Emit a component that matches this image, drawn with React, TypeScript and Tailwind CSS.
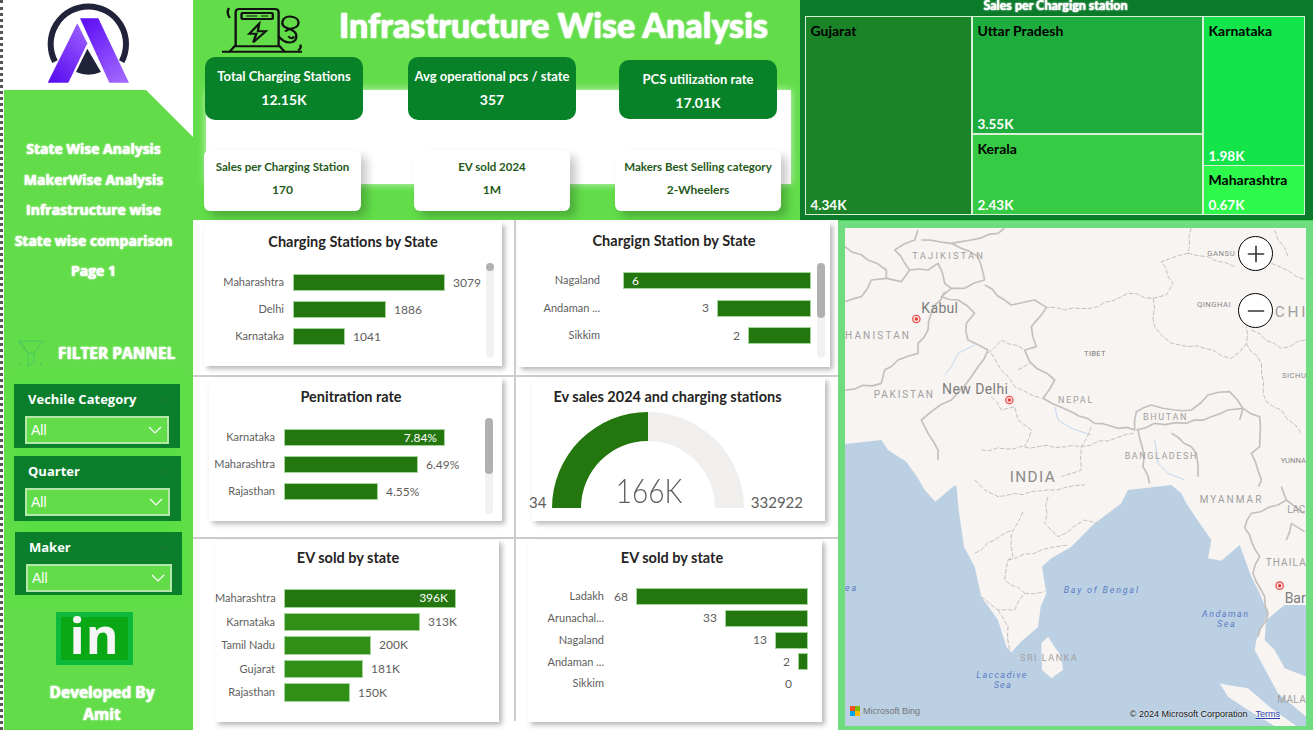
import React from "react";
import { Plus, Minus } from "lucide-react";

const narrow = "font-['Lato',sans-serif]";
const open = "font-['Open_Sans',sans-serif]";
const glow = "[text-shadow:0_0_2px_#fff,0_0_1px_#fff]";

function Logo() {
  return (
    <svg viewBox="12 0 567 270" className="w-[189px] h-[90px] block">
      <defs>
        <linearGradient id="l1" x1="0.8" y1="0" x2="0.2" y2="1">
          <stop offset="0" stopColor="#9a5cff" />
          <stop offset="1" stopColor="#5a10f0" />
        </linearGradient>
        <linearGradient id="l2" x1="0.2" y1="0" x2="0.8" y2="1">
          <stop offset="0" stopColor="#5f12f5" />
          <stop offset="1" stopColor="#a066ff" />
        </linearGradient>
      </defs>
      <path d="M165 185 A113 113 0 1 1 365 185" fill="none" stroke="#20233a" strokeWidth="18" />
      <path d="M262 146 L303 216 Q265 232 228 216 Z" fill="#20233a" />
      <path d="M232 70 L262 130 L205 248 L143 248 Z" fill="url(#l1)" />
      <path d="M240 55 L295 55 L387 248 L328 248 Z" fill="url(#l2)" />
    </svg>
  );
}

function Funnel() {
  return (
    <svg viewBox="0 0 27 27" className="w-[27px] h-[27px]" fill="none" stroke="#49c85c" strokeWidth="1">
      <path d="M1 1 H26 L17 13 V23 L11 26 V13 Z" />
      <path d="M3 1 L11 13 H17" />
      <circle cx="3" cy="24" r="1" fill="#49c85c" stroke="none" />
      <circle cx="24" cy="24" r="1" fill="#49c85c" stroke="none" />
    </svg>
  );
}

function Chev({ className }: { className: string }) {
  return (
    <svg viewBox="0 0 14 8" className={className} fill="none" stroke="currentColor" strokeWidth="1.2">
      <path d="M1 1 L7 7 L13 1" />
    </svg>
  );
}

function Slicer({ title, cls, inner }: { title: string; cls: string; inner: string }) {
  return (
    <div className={`bg-[#0b7e2c] shadow-[0_0_10px_#4fe23f] ${cls}`}>
      <div className="flex items-center justify-between pr-[11px] h-[32px] pl-[14px]">
        <span className={`${open} text-[13px] font-bold text-white`}>{title}</span>
        <Chev className="w-[10px] h-[6px] text-[#2f6f3d]" />
      </div>
      <div className={`${inner} h-[28px] bg-[#62dd49] border-2 border-[#b4e8a8] flex items-center justify-between pl-[4px] pr-[5px]`}>
        <span className="font-['Liberation_Sans',sans-serif] text-[14px] text-white mt-[1px]">All</span>
        <Chev className="w-[14px] h-[8px] text-white" />
      </div>
    </div>
  );
}

function Sidebar() {
  const nav = ["State Wise Analysis", "MakerWise Analysis", "Infrastructure wise", "State wise comparison", "Page 1"];
  return (
    <div className="w-[193px] h-[730px] shrink-0 border-l-[3px] border-dotted border-[#555] pl-px bg-white flex flex-col">
      <Logo />
      <div className="flex-1 bg-[#62dd49] [clip-path:polygon(0_0,142px_0,100%_47px,100%_100%,0_100%)] flex flex-col">
        <div className="mt-[44px] flex flex-col items-center pr-[10px]">
          {nav.map((n) => (
            <div key={n} className={`${open} h-[30.6px] leading-[30px] text-[14px] font-bold text-white ${glow}`}>{n}</div>
          ))}
        </div>
        <div className="flex items-center mt-[53px] ml-[13px]">
          <Funnel />
          <span className={`${open} ml-[14px] text-[15.5px] font-bold text-white ${glow}`}>FILTER PANNEL</span>
        </div>
        <Slicer title="Vechile Category" cls="mt-[17px] ml-[10px] w-[166px] h-[64px]" inner="ml-[11px] w-[144px]" />
        <Slicer title="Quarter" cls="mt-[8px] ml-[10px] w-[167px] h-[65px]" inner="ml-[11px] w-[145px]" />
        <Slicer title="Maker" cls="mt-[11px] ml-[11px] w-[167px] h-[63px]" inner="ml-[11px] w-[146px]" />
        <div className="mt-[17px] ml-[52px] w-[77px] h-[53px] bg-[#0cb93a] p-[5px]">
          <div className="w-full h-full bg-[#0aa815] flex items-center justify-center">
            <span className={`${open} font-bold text-[50px] leading-none text-[#f6f6f6] tracking-[1px] -mt-[6px]`}>in</span>
          </div>
        </div>
        <div className={`${open} mt-[16px] ml-[8px] w-[180px] text-center text-[15.5px] leading-[22px] font-bold text-white ${glow}`}>
          Developed By<br />Amit
        </div>
      </div>
    </div>
  );
}

function EvIcon() {
  return (
    <svg viewBox="0 0 210 150" preserveAspectRatio="none" className="w-[82px] h-[50px]" fill="none" stroke="#111" strokeWidth="6">
      <path d="M35 130 V28 Q35 18 45 18 H135 Q145 18 145 28 V130" />
      <rect x="50" y="30" width="80" height="18" rx="2" />
      <path d="M62 39 H90 M100 39 H118" strokeWidth="3" />
      <path d="M95 62 L70 92 L88 92 L80 118 L112 85 L92 85 Z" />
      <path d="M0 146 H205" strokeWidth="6" />
      <path d="M20 146 L32 130 H148 L160 146" />
      <path d="M145 100 C165 128 195 122 190 95 C185 70 150 82 155 55 C160 33 198 38 196 60 C195 80 168 74 162 86" />
      <path d="M170 100 C175 108 182 108 184 100" />
      <path d="M18 15 Q10 28 20 45 M200 125 Q205 135 195 142" />
    </svg>
  );
}

function Kpi({ t, v, cls, dark }: { t: string; v: string; cls: string; dark?: boolean }) {
  return dark ? (
    <div className={`rounded-[10px] bg-[#078229] flex flex-col items-center justify-center text-white ${cls}`}>
      <div className={`${narrow} font-bold text-[13px] leading-[17px] whitespace-nowrap`}>{t}</div>
      <div className={`${narrow} font-bold text-[14px] leading-[19px] mt-[5px] whitespace-nowrap`}>{v}</div>
    </div>
  ) : (
    <div className={`rounded-[6px] bg-white flex flex-col items-center shadow-[6px_6px_10px_rgba(0,0,0,0.22)] text-[#1f5a1a] ${cls}`}>
      <div className={`${narrow} font-bold text-[11.5px] leading-[16px] mt-[9px] whitespace-nowrap`}>{t}</div>
      <div className={`${narrow} font-bold text-[12px] leading-[16px] mt-[7px] whitespace-nowrap`}>{v}</div>
    </div>
  );
}

function Header() {
  return (
    <div className="relative w-[607px] h-[220px] bg-[#62dd49] shrink-0 overflow-hidden">
      <div className="absolute left-[13px] top-[90px] w-[585px] h-[94px] bg-white shadow-[0_0_8px_rgba(255,255,255,0.7)]" />
      <div className="relative h-[57px] flex">
        <div className="ml-[29px] mt-[3px]"><EvIcon /></div>
        <div className={`${narrow} ml-[35px] mt-[5px] text-[34px] leading-[40px] font-black text-white whitespace-nowrap ${glow}`}>Infrastructure Wise Analysis</div>
      </div>
      <div className="relative flex items-start h-[93px]">
        <Kpi dark t="Total Charging Stations" v="12.15K" cls="ml-[12px] w-[158px] h-[63px]" />
        <Kpi dark t="Avg operational pcs / state" v="357" cls="ml-[45px] w-[168px] h-[63px]" />
        <Kpi dark t="PCS utilization rate" v="17.01K" cls="ml-[43px] mt-[3px] w-[158px] h-[59px] pt-[3px]" />
      </div>
      <div className="relative flex items-start">
        <Kpi t="Sales per Charging Station" v="170" cls="ml-[11px] w-[157px] h-[61px]" />
        <Kpi t="EV sold 2024" v="1M" cls="ml-[53px] w-[156px] h-[61px]" />
        <Kpi t="Makers Best Selling category" v="2-Wheelers" cls="ml-[45px] w-[166px] h-[61px]" />
      </div>
    </div>
  );
}

function Tile({ name, val, cls }: { name: string; val: string; cls: string }) {
  return (
    <div className={`flex flex-col justify-between pl-[5px] pr-1 pt-[5px] pb-[1px] ${cls}`}>
      <div className={`${narrow} font-bold text-[14px] leading-[17px] text-black whitespace-nowrap`}>{name}</div>
      <div className={`${narrow} font-bold text-[13.5px] leading-[16px] text-white`}>{val}</div>
    </div>
  );
}

function Treemap() {
  return (
    <div className="flex-1 h-[220px] bg-[#0b7a2a] flex flex-col items-center">
      <div className={`${narrow} h-[16px] w-[510px] pr-[2px] text-center text-[12.5px] leading-[11px] font-bold text-white ${glow}`}>Sales per Chargign station</div>
      <div className="w-[500px] h-[199px] ml-[-4px] bg-[#d8f0d8] p-px flex gap-[2px]">
        <Tile name="Gujarat" val="4.34K" cls="w-[165px] bg-[#1b8429]" />
        <div className="w-[229px] flex flex-col gap-[2px]">
          <Tile name="Uttar Pradesh" val="3.55K" cls="h-[116px] bg-[#1fac3e]" />
          <Tile name="Kerala" val="2.43K" cls="flex-1 bg-[#37ca44]" />
        </div>
        <div className="flex-1 flex flex-col gap-px">
          <Tile name="Karnataka" val="1.98K" cls="h-[148px] bg-[#12e44a]" />
          <Tile name="Maharashtra" val="0.67K" cls="flex-1 bg-[#2dfa4a]" />
        </div>
      </div>
    </div>
  );
}

type Bar = { l: string; v: string; w: number; inside?: boolean; c?: string };

const labelCls = `${narrow} text-[11px] text-[#605e5c] whitespace-nowrap text-right`;
const valueCls = `${narrow} text-[12px] text-[#605e5c] whitespace-nowrap`;

function LeftBars({ bars, labelW, rowH, gap, top }: { bars: Bar[]; labelW: number; rowH: number; gap: number; top: number }) {
  return (
    <div className="flex flex-col" style={{ gap, marginTop: top }}>
      {bars.map((b) => (
        <div key={b.l} className="flex items-center" style={{ height: rowH }}>
          <div className={labelCls} style={{ width: labelW }}>{b.l}</div>
          <div
            className={`ml-[9px] h-full border border-[#a5d49b] flex items-center justify-end pr-[7px] ${b.c === "light" ? "bg-[#2f9015]" : "bg-[#24760f]"}`}
            style={{ width: b.w }}
          >
            {b.inside && <span className={`${narrow} text-[12px] text-white`}>{b.v}</span>}
          </div>
          {!b.inside && <div className={`${valueCls} ml-[8px]`}>{b.v}</div>}
        </div>
      ))}
    </div>
  );
}

function RightBars({ bars, labelW, rowH, gap, top, barsW }: { bars: Bar[]; labelW: number; rowH: number; gap: number; top: number; barsW: number }) {
  return (
    <div className="flex flex-col" style={{ gap, marginTop: top }}>
      {bars.map((b) => (
        <div key={b.l} className="flex items-center" style={{ height: rowH }}>
          <div className={labelCls} style={{ width: labelW }}>{b.l}</div>
          <div className="flex items-center justify-end h-full" style={{ width: barsW }}>
            {!b.inside && <span className={`${valueCls} mr-[8px]`}>{b.v}</span>}
            {b.w > 0 && (
              <div className="h-full bg-[#24760f] border border-[#a5d49b] flex items-center pl-[8px]" style={{ width: b.w }}>
                {b.inside && <span className={`${narrow} text-[12px] text-white`}>{b.v}</span>}
              </div>
            )}
            {b.w === 0 && <div className="w-[8px]" />}
          </div>
        </div>
      ))}
    </div>
  );
}

function Scroll({ h, thumb, thumbH, cls }: { h: number; thumb: string; thumbH: number; cls: string }) {
  return (
    <div className={`w-[8px] rounded bg-[#f1f1f1] ${cls}`} style={{ height: h }}>
      <div className={`rounded ${thumb}`} style={{ height: thumbH }} />
    </div>
  );
}

const title = `${narrow} font-bold text-[14.5px] leading-[18px] text-[#252423] text-center whitespace-nowrap`;
const cardShadow = "bg-white shadow-[3px_3px_5px_rgba(0,0,0,0.28)]";

function Gauge() {
  const cx = 100, cy = 98, R = 96, r = 67;
  return (
    <div className="relative w-[200px] h-[100px] ml-[16px] mt-[4px]">
      <svg viewBox="0 0 200 100" className="w-[200px] h-[100px]">
        <path d={`M${cx} ${cy - R} A${R} ${R} 0 0 1 ${cx + R} ${cy} H${cx + r} A${r} ${r} 0 0 0 ${cx} ${cy - r} Z`} fill="#f0efee" />
        <path d={`M${cx} ${cy - R} A${R} ${R} 0 0 0 ${cx - R} ${cy} H${cx - r} A${r} ${r} 0 0 1 ${cx} ${cy - r} Z`} fill="#24760f" />
      </svg>
      <div className={`${narrow} absolute left-[2px] right-0 top-[60px] text-center text-[33px] leading-[40px] font-light text-[#605e5c] scale-x-85`}>166K</div>
    </div>
  );
}

function Charts() {
  return (
    <div className="w-[645px] h-[510px] bg-white flex flex-col">
      <div className="h-[157px] flex border-b-2 border-[#cccccc]">
        <div className="w-[323px] border-r-2 border-[#cccccc] pl-[11px] pt-[2px]">
          <div className={`${cardShadow} w-[298px] h-[144px] flex flex-col`}>
            <div className={`${title} mt-[11px]`}>Charging Stations by State</div>
            <div className="flex">
              <div className="w-[282px]">
                <LeftBars top={23} gap={10} rowH={17} labelW={80} bars={[
                  { l: "Maharashtra", v: "3079", w: 152 },
                  { l: "Delhi", v: "1886", w: 93 },
                  { l: "Karnataka", v: "1041", w: 52 },
                ]} />
              </div>
              <Scroll cls="mt-[12px]" h={95} thumbH={8} thumb="bg-[#b0b0b0]" />
            </div>
          </div>
        </div>
        <div className="pl-[2px] pt-[2px]">
          <div className={`${cardShadow} w-[312px] h-[145px] flex flex-col`}>
            <div className={`${title} mt-[10px]`}>Chargign Station by State</div>
            <div className="flex">
              <div className="w-[299px]">
                <RightBars top={22} gap={10.5} rowH={17} labelW={82} barsW={211} bars={[
                  { l: "Nagaland", v: "6", w: 188, inside: true },
                  { l: "Andaman ...", v: "3", w: 94 },
                  { l: "Sikkim", v: "2", w: 63 },
                ]} />
              </div>
              <Scroll cls="mt-[13px]" h={95} thumbH={55} thumb="bg-[#b0b0b0]" />
            </div>
          </div>
        </div>
      </div>
      <div className="h-[162px] flex border-b-2 border-[#cccccc]">
        <div className="w-[323px] border-r-2 border-[#cccccc] pl-[16px] pt-px">
          <div className={`${cardShadow} w-[293px] h-[143px] flex flex-col`}>
            <div className={`${title} mt-[10px] pr-[9px]`}>Penitration rate</div>
            <div className="flex">
              <div className="w-[276px]">
                <LeftBars top={23} gap={10} rowH={17} labelW={66} bars={[
                  { l: "Karnataka", v: "7.84%", w: 161, inside: true },
                  { l: "Maharashtra", v: "6.49%", w: 134 },
                  { l: "Rajasthan", v: "4.55%", w: 94 },
                ]} />
              </div>
              <Scroll cls="mt-[12px]" h={96} thumbH={56} thumb="bg-[#b0b0b0]" />
            </div>
          </div>
        </div>
        <div className="pl-[16px] pt-px">
          <div className={`${cardShadow} w-[293px] h-[143px] flex flex-col`}>
            <div className={`${title} mt-[10px] pr-[22px]`}>Ev sales 2024 and charging stations</div>
            <div className="flex items-end">
              <Gauge />
            </div>
            <div className={`${narrow} flex justify-between text-[15px] leading-[18px] text-[#605e5c] -mt-[17px] pr-[22px] -ml-[3px]`}>
              <span>34</span>
              <span>332922</span>
            </div>
          </div>
        </div>
      </div>
      <div className="flex-1 flex">
        <div className="w-[323px] h-[182px] border-r-2 border-[#cccccc] pl-[22px] pt-[1px]">
          <div className={`${cardShadow} w-[284px] h-[182px] flex flex-col`}>
            <div className={`${title} mt-[9px] pr-[18px]`}>EV sold by state</div>
            <LeftBars top={22} gap={5} rowH={18.6} labelW={60} bars={[
              { l: "Maharashtra", v: "396K", w: 172, inside: true },
              { l: "Karnataka", v: "313K", w: 136, c: "light" },
              { l: "Tamil Nadu", v: "200K", w: 87, c: "light" },
              { l: "Gujarat", v: "181K", w: 79, c: "light" },
              { l: "Rajasthan", v: "150K", w: 66, c: "light" },
            ]} />
          </div>
        </div>
        <div className="pl-[12px] pt-[1px]">
          <div className={`${cardShadow} w-[294px] h-[182px] flex flex-col`}>
            <div className={`${title} mt-[9px] pr-[6px]`}>EV sold by state</div>
            <RightBars top={21} gap={4.8} rowH={17} labelW={76} barsW={204} bars={[
              { l: "Ladakh", v: "68", w: 172 },
              { l: "Arunachal...", v: "33", w: 83 },
              { l: "Nagaland", v: "13", w: 33 },
              { l: "Andaman ...", v: "2", w: 5 },
              { l: "Sikkim", v: "0", w: 0 },
            ]} />
          </div>
        </div>
      </div>
    </div>
  );
}

function Pin({ x, y }: { x: number; y: number }) {
  return (
    <g>
      <circle cx={x} cy={y} r="13" fill="#ef5350" />
      <circle cx={x} cy={y} r="9" fill="#fbeaea" />
      <circle cx={x} cy={y} r="5" fill="#e53935" />
    </g>
  );
}

function L({ x, y, s, t, w, c = "#a0a0a0", i }: { x: number; y: number; s: number; t: string; w?: number; c?: string; i?: boolean }) {
  return (
    <text x={x} y={y} fontSize={s} textLength={w} fill={c} fontStyle={i ? "italic" : "normal"} fontFamily="Roboto, sans-serif">
      {t}
    </text>
  );
}

// adds small, repeatable kinks between the points of a border so it reads as a traced line
function wiggle(points: string, amp: number) {
  const p = points.split(" ").map((s) => s.split(",").map(Number));
  const out: string[] = [];
  p.forEach((a, i) => {
    out.push(`${a[0]},${a[1]}`);
    const b = p[i + 1];
    if (!b) return;
    const n = Math.floor(Math.hypot(b[0] - a[0], b[1] - a[1]) / 24);
    for (let k = 1; k < n; k++) {
      const t = k / n;
      const o = Math.sin((a[0] + a[1]) * 0.37 + k * 2.3) * amp;
      const dx = -(b[1] - a[1]) / Math.hypot(b[0] - a[0], b[1] - a[1]);
      const dy = (b[0] - a[0]) / Math.hypot(b[0] - a[0], b[1] - a[1]);
      out.push(`${a[0] + (b[0] - a[0]) * t + dx * o},${a[1] + (b[1] - a[1]) * t + dy * o}`);
    }
  });
  return out.join(" ");
}

function MapArt() {
  const solid = [
    "21,80 90,120 145,150 145,175 100,180 70,230 21,245",
    "145,175 190,185 215,150 270,150 300,130 320,190 340,205 380,205 440,180",
    "170,90 200,130 215,150",
    "170,90 230,60 240,30",
    "250,60 340,70 400,60 480,40 500,24",
    "340,70 420,110 440,180",
    "440,195 520,255 590,240 625,262 580,320 595,380 560,390 575,425 650,480 615,535 700,575 770,610 890,630 895,575 940,555 1010,570 1060,570 1110,525 1175,515 1215,565 1205,600",
    "340,205 310,230 360,240 410,280 385,310 390,360 450,390 420,440 400,470 340,540 280,575 250,600 270,640 300,690 300,720",
    "320,215 280,280 270,330 240,370 240,400 180,420 140,450 130,490 21,510",
    "895,630 950,610 1045,610 1120,590 1170,570 1215,565",
    "1215,565 1265,590 1265,680 1240,700 1270,780 1262,800",
    "900,630 915,690 915,740 935,790",
    "1000,640 1060,680 1075,700 1080,770",
    "1220,925 1240,880 1320,855 1345,840 1330,800",
    "1220,925 1265,1010 1245,1060 1280,1130 1290,1180 1260,1250",
    "1345,960 1360,910 1400,935",
    "1345,840 1400,880",
  ];
  const dashed = [
    "1060,24 1050,100 970,125 1005,190 985,225 945,235 870,220 780,260 680,270 625,262",
    "945,235 950,320 1000,370 1100,385 1180,415 1225,370 1225,320",
    "1225,370 1270,430 1275,520 1285,545 1330,570 1390,640",
    "1050,100 1110,110 1190,140",
    "1300,130 1405,180",
    "1310,30 1350,110",
    "1240,330 1330,385 1405,360",
    "450,400 490,360 560,390",
    "460,400 490,450 530,500 610,535",
    "540,450 575,430",
    "460,530 490,570 530,560 540,600 580,630 560,680",
    "430,690 600,680 730,680 890,640",
    "760,620 730,680 730,750 670,770",
    "410,780 440,810 480,830 630,810 740,795",
    "630,830 620,910 660,950 740,900 780,910",
    "555,875 520,940 525,1010 510,1020 500,1080 560,1120 530,1170 480,1170 430,1130",
    "410,1000 470,960 520,930",
    "510,1020 610,990 690,975",
    "560,1120 620,1115",
    "480,1170 510,1220 515,1290",
  ];
  const land = "21,24 21,672 130,660 150,690 205,725 240,775 260,810 292,845 345,800 355,795 362,870 378,980 410,1040 430,1130 480,1200 505,1280 520,1297 552,1262 600,1222 608,1160 625,1120 612,1040 640,1015 700,980 770,910 850,850 870,810 1000,795 1030,820 1045,850 1085,910 1120,960 1110,1015 1150,1022 1205,975 1240,1070 1265,1120 1290,1180 1255,1260 1250,1290 1320,1420 1405,1490 1405,24";
  return (
    <svg viewBox="21 24 1383 1494" className="w-full h-full block" preserveAspectRatio="none">
      <rect x="21" y="24" width="1383" height="1494" fill="#bcd0e4" />
      <polygon fill="#f7f4f2" points={land} />
      <polygon fill="#bcd0e4" points="1285,1200 1340,1155 1405,1155 1405,1370 1340,1345 1310,1290 1280,1260" />
      <polygon fill="#f7f4f2" points="1145,1390 1170,1395 1230,1405 1300,1465 1375,1518 1310,1518 1230,1470 1170,1430" />
      <polygon fill="#f7f4f2" points="610,1270 630,1250 670,1310 675,1350 640,1375 612,1350" />
      <g fill="none" stroke="#c3d8ee" strokeWidth="3">
        <polyline points="410,375 360,400 340,440 320,465" />
        <polyline points="650,560 660,600 700,625 760,645" />
        <polyline points="950,660 960,730 990,760 1040,780" />
      </g>
      <g fill="none" stroke="#c4c0bd" strokeWidth="5" strokeLinejoin="round">
        {solid.map((p) => <polyline key={p} points={wiggle(p, 4)} />)}
      </g>
      <g fill="none" stroke="#c4c0bd" strokeWidth="3" strokeDasharray="14 5">
        {dashed.map((p) => <polyline key={p} points={wiggle(p, 4)} />)}
      </g>
      <L x={223} y={118} s={28} w={212} t="TAJIKISTAN" />
      <L x={250} y={278} s={42} w={110} t="Kabul" c="#7d7d7d" />
      <L x={21} y={358} s={30} w={192} t="HANISTAN" />
      <L x={107} y={535} s={30} w={178} t="PAKISTAN" />
      <L x={312} y={522} s={42} w={198} t="New Delhi" c="#7d7d7d" />
      <L x={738} y={408} s={23} w={65} t="TIBET" c="#777" />
      <L x={660} y={550} s={27} w={103} t="NEPAL" />
      <L x={915} y={600} s={27} w={130} t="BHUTAN" />
      <L x={860} y={716} s={27} w={215} t="BANGLADESH" />
      <L x={515} y={785} s={46} w={135} t="INDIA" c="#8a8a8a" />
      <L x={1108} y={107} s={23} w={82} t="GANSU" c="#888" />
      <L x={1077} y={260} s={23} w={101} t="QINGHAI" c="#888" />
      <L x={1310} y={290} s={46} w={92} t="CHI" />
      <L x={1332} y={475} s={23} w={72} t="SICHU" c="#888" />
      <L x={1328} y={730} s={23} w={76} t="YUNNA" c="#888" />
      <L x={1085} y={848} s={30} w={185} t="MYANMAR" />
      <L x={1348} y={878} s={30} w={54} t="LAC" />
      <L x={1283} y={1038} s={30} w={120} t="THAILA" />
      <L x={1340} y={1148} s={42} w={63} t="Bar" c="#7d7d7d" />
      <L x={1318} y={1448} s={30} w={85} t="MALA" />
      <L x={546} y={1323} s={27} w={170} t="SRI LANKA" />
      <L x={677} y={1118} s={27} w={223} t="Bay of Bengal" c="#5b7cc4" i />
      <L x={1092} y={1192} s={27} w={138} t="Andaman" c="#5b7cc4" i />
      <L x={1137} y={1222} s={27} w={53} t="Sea" c="#5b7cc4" i />
      <L x={415} y={1375} s={27} w={150} t="Laccadive" c="#5b7cc4" i />
      <L x={467} y={1405} s={27} w={51} t="Sea" c="#5b7cc4" i />
      <L x={21} y={1112} s={27} w={34} t="ea" c="#5b7cc4" i />
      <Pin x={235} y={297} />
      <Pin x={514} y={540} />
      <Pin x={1325} y={1097} />
    </svg>
  );
}

function MapPanel() {
  const sf = "font-['Liberation_Sans',sans-serif]";
  return (
    <div className="flex-1 h-[510px] bg-[#6fdc7f] border-t border-[#43d455] pt-[7px] px-[7px] pb-[4px]">
      <div className="relative w-[461px] h-[498px] overflow-hidden">
        <MapArt />
        <div className="absolute left-[393px] top-[8px] w-[35px] h-[35px] rounded-full bg-white border border-black flex items-center justify-center">
          <Plus size={26} strokeWidth={1.5} className="text-[#333]" />
        </div>
        <div className="absolute left-[393px] top-[65px] w-[35px] h-[35px] rounded-full bg-white border border-black flex items-center justify-center">
          <Minus size={26} strokeWidth={1.5} className="text-[#333]" />
        </div>
        <div className="absolute left-[5px] bottom-[10px] flex items-center gap-[3px]">
          <div className="grid grid-cols-2 w-[10px] h-[10px]">
            <div className="bg-[#f25022]" />
            <div className="bg-[#7fba00]" />
            <div className="bg-[#00a4ef]" />
            <div className="bg-[#ffb900]" />
          </div>
          <span className={`${sf} text-[9px] leading-[10px] text-[#737373]`}>Microsoft Bing</span>
        </div>
        <div className={`${sf} absolute right-[26px] bottom-[6px] flex gap-[8px] text-[9px] leading-[12px] [text-shadow:0_0_2px_#fff]`}>
          <span className="text-[#111]">© 2024 Microsoft Corporation</span>
          <span className="text-[#2a3fb0] underline">Terms</span>
        </div>
      </div>
    </div>
  );
}

export default function App() {
  return (
    <div className="w-[1313px] h-[730px] flex overflow-hidden bg-white">
      <Sidebar />
      <div className="flex-1 flex flex-col">
        <div className="flex h-[220px]">
          <Header />
          <Treemap />
        </div>
        <div className="flex h-[510px]">
          <Charts />
          <MapPanel />
        </div>
      </div>
    </div>
  );
}
